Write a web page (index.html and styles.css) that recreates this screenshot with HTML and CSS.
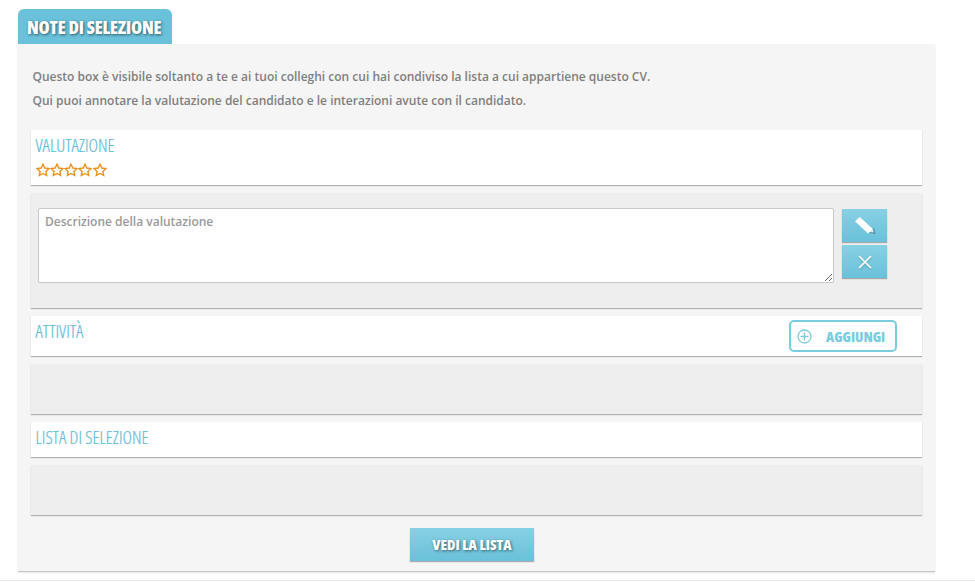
FILE: index.html
```html
<!DOCTYPE html>
<html lang="en">
<head>
    <meta charset="UTF-8">
    <meta name="viewport" content="width=device-width, initial-scale=1.0">
    <title>Note di selezione</title>
    <link rel="stylesheet" href="styles.css">
</head>
<body>

    <div class="tab">NOTE DI SELEZIONE</div>
    <div class="panel">
        <div class="intro">
            <p>Questo box è visibile soltanto a te e ai tuoi colleghi con cui hai condiviso la lista a cui appartiene questo CV.</p>
            <p>Qui puoi annotare la valutazione del candidato e le interazioni avute con il candidato.</p>
        </div>

        <div class="row row-rating">
            <h3>VALUTAZIONE</h3>
            <div class="stars">
                <svg viewBox="0 0 14 14"><path d="M7 1.2l1.8 3.8 4.1.5-3 2.9.8 4.1L7 10.5l-3.7 2 .8-4.1-3-2.9 4.1-.5z"/></svg>
                <svg viewBox="0 0 14 14"><path d="M7 1.2l1.8 3.8 4.1.5-3 2.9.8 4.1L7 10.5l-3.7 2 .8-4.1-3-2.9 4.1-.5z"/></svg>
                <svg viewBox="0 0 14 14"><path d="M7 1.2l1.8 3.8 4.1.5-3 2.9.8 4.1L7 10.5l-3.7 2 .8-4.1-3-2.9 4.1-.5z"/></svg>
                <svg viewBox="0 0 14 14"><path d="M7 1.2l1.8 3.8 4.1.5-3 2.9.8 4.1L7 10.5l-3.7 2 .8-4.1-3-2.9 4.1-.5z"/></svg>
                <svg viewBox="0 0 14 14"><path d="M7 1.2l1.8 3.8 4.1.5-3 2.9.8 4.1L7 10.5l-3.7 2 .8-4.1-3-2.9 4.1-.5z"/></svg>
            </div>
        </div>

        <div class="block block-note">
            <textarea placeholder="Descrizione della valutazione"></textarea>
            <div class="note-actions">
                <button class="icon-btn">
                    <svg width="22" height="20" viewBox="0 0 22 20"><path d="M15 17l5-5 1.5 6z" fill="#4f8ea3"/><path d="M1 5.3L5.8 1l13 12-4.800 4.500z" fill="#fff"/><path d="M15.5 16l3.300-3.200 1 3.700z" fill="#d9eef4"/></svg>
                </button>
                <button class="icon-btn">
                    <svg class="x-icon" width="14" height="14" viewBox="0 0 14 14"><path d="M1 1l12 12M13 1L1 13" stroke="#fff" stroke-width="1.6" fill="none"/></svg>
                </button>
            </div>
        </div>

        <div class="row row-activity">
            <h3>ATTIVITÀ</h3>
            <button class="add-btn">
                <svg width="15" height="15" viewBox="0 0 15 15"><circle cx="7.5" cy="7.5" r="6.5" fill="none" stroke="#7accdf" stroke-width="1.3"/><path d="M7.5 3.5v8M3.5 7.5h8" stroke="#7accdf" stroke-width="1.3"/></svg>
                <span>AGGIUNGI</span>
            </button>
        </div>
        <div class="block block-empty"></div>

        <div class="row row-list">
            <h3>LISTA DI SELEZIONE</h3>
        </div>
        <div class="block block-empty"></div>

        <div class="footer">
            <button class="btn">VEDI LA LISTA</button>
        </div>
    </div>
    <div class="bottom-line"></div>

</body>
</html>
```

FILE: styles.css
```css
* {
    margin: 0;
    padding: 0;
    box-sizing: border-box;
    font-family: "Open Sans", Arial, sans-serif;
}
body {
    background: #fff;
    padding: 9px 40px 0 18px;
    overflow: hidden;
}
.tab {
    position: relative;
    z-index: 1;
    width: 154px;
    height: 35px;
    padding-left: 9px;
    background: #69c1da;
    border-radius: 6px 6px 0 0;
    color: #fff;
    font-size: 18px;
    font-weight: 800;
    font-stretch: 75%;
    letter-spacing: -0.2px;
    line-height: 36px;
    text-shadow: 1px 1px 3px rgba(0, 0, 0, 0.55);
}
.panel {
    height: 528px;
    padding: 0 13px;
    background: #f5f5f5;
    border-bottom: 1px solid #c4c4c4;
    box-shadow: 0 1px 2px rgba(0, 0, 0, 0.1);
}
.intro {
    height: 86px;
    padding: 21px 1.5px 0;
    color: #7f7f7f;
    font-size: 12px;
    font-weight: 600;
    line-height: 24px;
}
.row {
    position: relative;
    margin-bottom: 8px;
    padding: 3px 4.5px 0;
    background: #fff;
    box-shadow: 0 1px 1px rgba(0, 0, 0, 0.28);
}
.row h3 {
    color: #5fbcd7;
    -webkit-text-stroke: 0.2px #5fbcd7;
    font-size: 18px;
    font-weight: 300;
    font-stretch: 75%;
    line-height: 24px;
}
.row-rating {
    height: 55px;
}
.row-activity {
    display: flex;
    justify-content: space-between;
    height: 40px;
}
.row-list {
    height: 35px;
}
.stars {
    display: flex;
    height: 14px;
    margin-top: 6px;
}
.stars svg {
    width: 14px;
    height: 14px;
    margin-right: 0.3px;
    fill: none;
    stroke: #e8921f;
    stroke-width: 1.4;
}
.block {
    margin-bottom: 8px;
    background: #eee;
    box-shadow: 0 1px 1px rgba(0, 0, 0, 0.28);
}
.block-note {
    display: flex;
    height: 115px;
    padding: 15px 35px 0 7px;
}
.block-empty {
    height: 50px;
}
textarea {
    flex: 1;
    height: 75px;
    padding: 5px 6px;
    border: 1px solid #c8c8c8;
    border-radius: 2px;
    outline: none;
    color: #777;
    font-size: 12px;
    font-weight: 600;
    line-height: 16px;
}
textarea::placeholder {
    color: #999;
}
.note-actions {
    display: flex;
    flex-direction: column;
    gap: 3px;
    margin-left: 8px;
    padding-top: 1px;
}
.icon-btn {
    display: flex;
    align-items: center;
    justify-content: center;
    width: 45px;
    height: 33px;
    border: none;
    background: linear-gradient(#88d0e3, #69c1da);
    box-shadow: 0 1px 1px rgba(0, 0, 0, 0.3);
}
.x-icon {
    filter: drop-shadow(0 1px 1px rgba(0, 0, 0, 0.2));
}
.add-btn {
    display: flex;
    align-items: center;
    width: 108px;
    height: 32px;
    margin: 1px 20.5px 0 0;
    padding-left: 6px;
    background: #fff;
    border: 2px solid #7accdf;
    border-radius: 5px;
    color: #7accdf;
    font-size: 14.2px;
    font-weight: 800;
    font-stretch: 75%;
}
.add-btn span {
    margin-left: 14px;
}
.footer {
    display: flex;
    justify-content: center;
    padding: 5px 9px 0 0;
}
.btn {
    width: 124px;
    height: 33px;
    padding-bottom: 1px;
    border: none;
    background: linear-gradient(#88d0e3, #69c1da);
    box-shadow: 0 1px 1px rgba(0, 0, 0, 0.3);
    color: #fff;
    font-size: 14.6px;
    font-weight: 800;
    font-stretch: 75%;
    text-shadow: 1px 1px 3px rgba(0, 0, 0, 0.55);
}
.bottom-line {
    height: 1px;
    margin: 8px -40px 0 -18px;
    background: #e8e8e8;
}
```
